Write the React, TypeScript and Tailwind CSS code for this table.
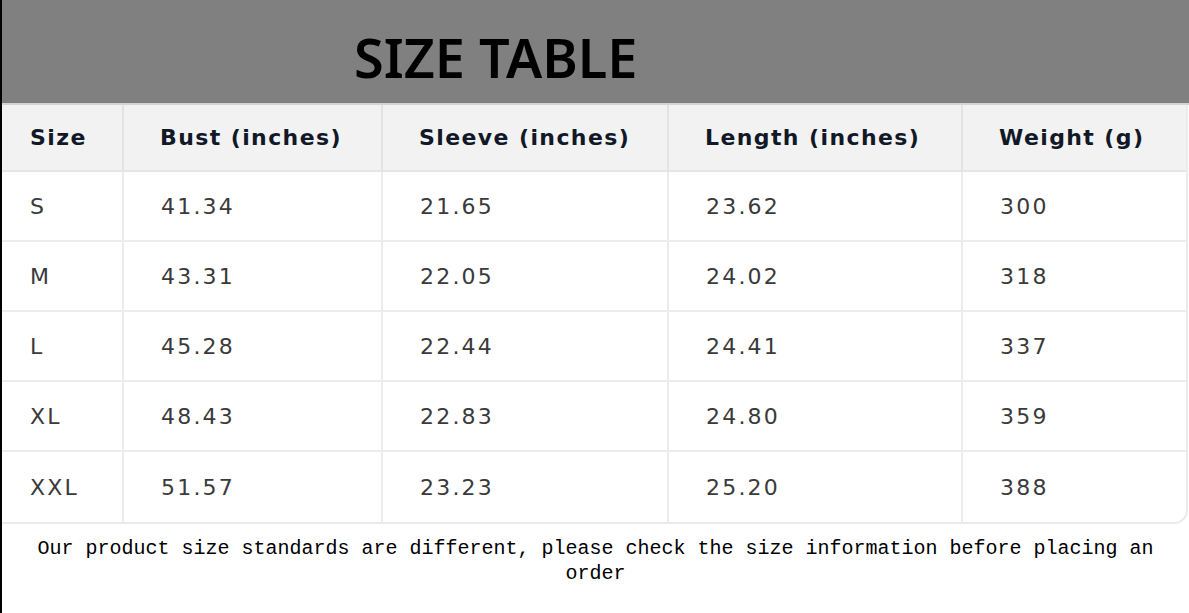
import React from "react";

const headers = ["Size", "Bust (inches)", "Sleeve (inches)", "Length (inches)", "Weight (g)"];

const rows = [
  ["S", "41.34", "21.65", "23.62", "300"],
  ["M", "43.31", "22.05", "24.02", "318"],
  ["L", "45.28", "22.44", "24.41", "337"],
  ["XL", "48.43", "22.83", "24.80", "359"],
  ["XXL", "51.57", "23.23", "25.20", "388"],
];

const cellFont = { fontFamily: '"DejaVu Sans", Verdana, sans-serif' };

const App: React.FC = () => {
  return (
    <div className="w-[1189px] h-[613px] bg-white border-l-[2px] border-black flex flex-col overflow-hidden">
      {/* title bar */}
      <div className="h-[105px] shrink-0 bg-[#808080] flex items-center pl-[352px] pt-[10px] border-b-[2px] border-[#d4d4d4]">
        <h1
          className="text-[54px] font-semibold text-black leading-none"
          style={{ fontFamily: '"Noto Sans", "Open Sans", sans-serif' }}
        >
          SIZE TABLE
        </h1>
      </div>

      {/* table */}
      <div
        className="w-[1186px] border-r-[2px] border-b-[2px] border-[#ebebeb] rounded-br-[14px] overflow-hidden"
        style={cellFont}
      >
        <div className="grid grid-cols-[120px_259px_286px_294px_225px] h-[67px] bg-[#f2f2f2] border-b-[2px] border-[#e6e6e6]">
          {headers.map((h, i) => (
            <div
              key={h}
              className={
                "flex items-center text-[22px] font-bold tracking-[1.4px] text-[#111827] " +
                (i === 0 ? "pl-[28px]" : "pl-[36px] border-l-[2px] border-[#e3e3e3]")
              }
            >
              {h}
            </div>
          ))}
        </div>
        {rows.map((r, ri) => (
          <div
            key={r[0]}
            className={
              "grid grid-cols-[120px_259px_286px_294px_225px] h-[70px] " +
              (ri < rows.length - 1 ? "border-b-[2px] border-[#ececec]" : "")
            }
          >
            {r.map((c, i) => (
              <div
                key={i}
                className={
                  "flex items-center text-[22px] tracking-[2.2px] text-[#3a3a3a] " +
                  (i === 0 ? "pl-[28px]" : "pl-[37px] border-l-[2px] border-[#ececec]")
                }
              >
                {c}
              </div>
            ))}
          </div>
        ))}
      </div>

      {/* note */}
      <p
        className="mt-[12px] px-[20px] text-center text-[20px] leading-[25px] text-black"
        style={{ fontFamily: '"Liberation Mono", "Courier New", monospace' }}
      >
        Our product size standards are different, please check the size information before placing an order
      </p>
    </div>
  );
};

export default App;
